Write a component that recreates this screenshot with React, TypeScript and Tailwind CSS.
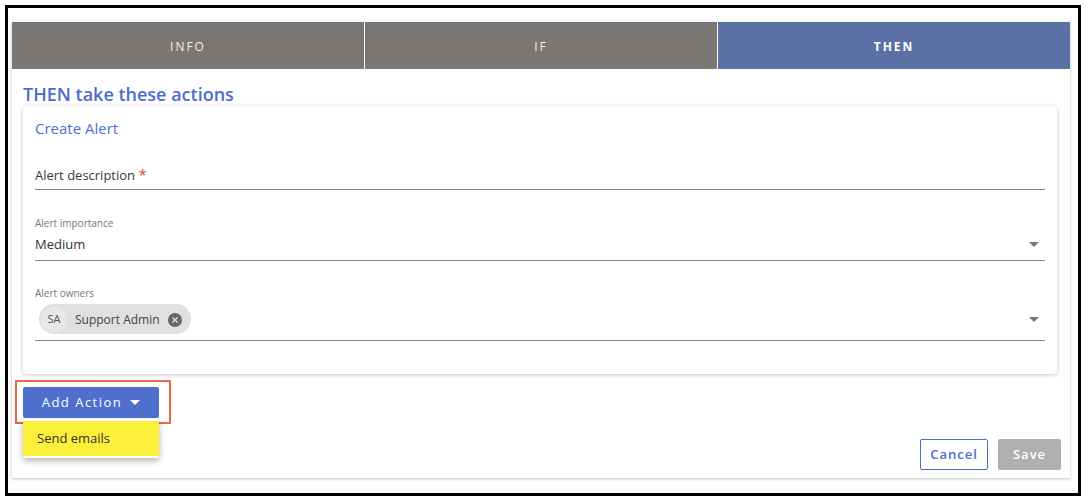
import React from "react";

const Caret = ({ className = "" }: { className?: string }) => (
  <svg width="10" height="5" viewBox="0 0 10 5" className={className}>
    <path d="M0 0 L10 0 L5 5 Z" fill="currentColor" />
  </svg>
);

export default function App() {
  return (
    <div className="w-[1087px] h-[498px] bg-white pt-[5px] pl-[5px]" style={{ fontFamily: '"Open Sans", "Noto Sans", sans-serif' }}>
      <div className="w-[1076px] h-[491px] border-[3px] border-black bg-white pt-[14px] pl-[4px]">
        <div className="relative w-[1058px] h-[456px] bg-white shadow-[0_1px_3px_rgba(0,0,0,0.25)] flex flex-col">
          {/* tabs */}
          <div className="flex h-[47px] shrink-0">
            <div className="flex-1 bg-[#7a7674] flex items-center justify-center pt-[2px] text-[12px] tracking-[2px] text-[#eeeeee]">INFO</div>
            <div className="w-[1px] bg-white" />
            <div className="flex-1 bg-[#7a7674] flex items-center justify-center pt-[2px] text-[12px] tracking-[2px] text-[#eeeeee]">IF</div>
            <div className="w-[1px] bg-white" />
            <div className="flex-1 bg-[#5b71a5] flex items-center justify-center pt-[2px] text-[12px] tracking-[2px] font-bold text-white">THEN</div>
          </div>
          <div className="pl-[11px] pr-[13px] flex flex-col">
            <div className="pt-[14px] h-[37px] text-[18px] leading-[22px] font-semibold text-[#4b6dcb]">THEN take these actions</div>
            <div className="rounded-[4px] bg-white shadow-[0_1px_4px_rgba(0,0,0,0.22)] px-[12px] pt-[12px] pb-[33px]">
              <div className="text-[15px] leading-[20px] text-[#4d72d0]">Create Alert</div>
              <div className="pt-[26px] pb-[4px] border-b border-[#8a8a8a] text-[13px] leading-[20px] text-[#3a3a3a]">
                Alert description <span className="text-[#d9453a] text-[15px]">*</span>
              </div>
              <div className="mt-[26px] pb-[6px] border-b border-[#8a8a8a]">
                <div className="text-[10px] leading-[14px] text-[#777777]">Alert importance</div>
                <div className="mt-[4px] flex items-center justify-between">
                  <span className="text-[13px] leading-[20px] text-[#333333]">Medium</span>
                  <Caret className="text-[#757575] mr-[6px]" />
                </div>
              </div>
              <div className="mt-[25px] pb-[6px] border-b border-[#8a8a8a]">
                <div className="text-[10px] leading-[14px] text-[#777777]">Alert owners</div>
                <div className="mt-[4px] flex items-center justify-between">
                  <div className="ml-[4px] h-[30px] rounded-full bg-[#e0e0e0] flex items-center pl-[2px] pr-[9px] pt-[1px]">
                    <div className="w-[26px] h-[26px] rounded-full bg-[#e8e8e8] flex items-center justify-center text-[11px] text-[#555555]">SA</div>
                    <span className="ml-[8px] text-[12px] text-[#444444]">Support Admin</span>
                    <div className="ml-[8px] w-[14px] h-[14px] rounded-full bg-[#666666] flex items-center justify-center">
                      <svg width="6" height="6" viewBox="0 0 6 6"><path d="M0.5 0.5 L5.5 5.5 M5.5 0.5 L0.5 5.5" stroke="#e0e0e0" strokeWidth="1.4" /></svg>
                    </div>
                  </div>
                  <Caret className="text-[#757575] mr-[6px]" />
                </div>
              </div>
            </div>
            {/* add action */}
            <div className="relative mt-[13px] h-[31px]">
              <div className="absolute left-[-8px] top-[-7px] w-[156px] h-[44px] border-2 border-[#e8674f]" />
              <button className="relative w-[136px] h-[31px] rounded-[2px] bg-[#4f6fcf] text-white text-[13px] tracking-[1.5px] flex items-center justify-center gap-[8px]">
                Add Action <Caret className="text-white" />
              </button>
              <div className="absolute left-0 top-[32px] w-[136px] bg-white py-[2px] shadow-[0_3px_6px_rgba(0,0,0,0.3)] rounded-[2px] z-10">
                <div className="bg-[#fbef3a] h-[35px] flex items-center pl-[14px] text-[13px] text-[#333333]">Send emails</div>
              </div>
            </div>
            <div className="mt-[21px] flex justify-end gap-[10px] mr-[-4px]">
              <button className="w-[68px] h-[31px] border border-[#4a6fcf] rounded-[2px] text-[#4a6fcf] text-[13px] tracking-[1px] font-semibold">Cancel</button>
              <button className="w-[63px] h-[31px] bg-[#b0b0b0] rounded-[2px] text-white text-[13px] tracking-[1px] font-semibold">Save</button>
            </div>
          </div>
        </div>
      </div>
    </div>
  );
}
